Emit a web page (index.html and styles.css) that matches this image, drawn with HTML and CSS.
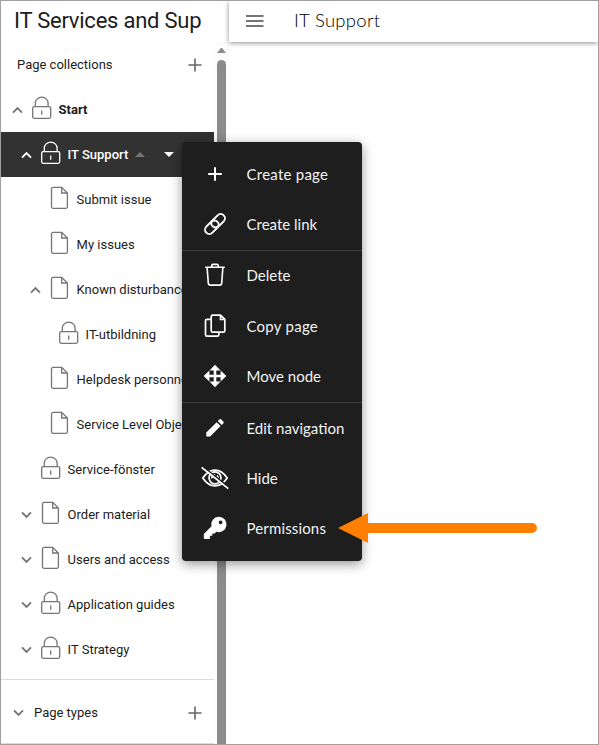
FILE: index.html
```html
<!DOCTYPE html>
<html lang="en">
<head>
<meta charset="utf-8">
<title>IT Support</title>
<link rel="stylesheet" href="styles.css">
</head>
<body>
<svg class="sprite" aria-hidden="true">
  <symbol id="up" viewBox="0 0 11 8"><path d="M1 6.6 5.5 2.1 10 6.6" fill="none" stroke="currentColor" stroke-width="1.9"/></symbol>
  <symbol id="down" viewBox="0 0 11 8"><path d="M1 1.4 5.5 5.9 10 1.4" fill="none" stroke="currentColor" stroke-width="1.9"/></symbol>
  <symbol id="lock" viewBox="0 0 20 24"><g fill="none" stroke="currentColor" stroke-width="1.3"><rect x=".7" y="10.6" width="18" height="11.7" rx="1.5"/><path d="M3.3 10.5V7.2a6.4 6.1 0 0 1 12.8 0v3.3M9.7 14.5v4.2"/></g></symbol>
  <symbol id="file" viewBox="0 0 20 24"><path d="M11.7 1.4H3a1.5 1.5 0 0 0-1.5 1.5v17.9A1.5 1.5 0 0 0 3 22.3h12.9a1.5 1.5 0 0 0 1.5-1.5V7zV7h5.7" fill="none" stroke="currentColor" stroke-width="1.3"/></symbol>
  <symbol id="plus" viewBox="0 0 14 14"><path d="M7 .5v13M.5 7h13" fill="none" stroke="currentColor" stroke-width="1.6"/></symbol>
</svg>
<div class="app">
  <aside class="sidebar">
    <div class="nav">
      <h1 class="title">IT Services and Sup</h1>
      <div class="section"><span>Page collections</span><svg class="plus"><use href="#plus"/></svg></div>
      <ul class="tree">
        <li class="row l0 root"><svg class="chev"><use href="#up"/></svg><svg class="ico"><use href="#lock"/></svg><span>Start</span></li>
        <li class="row l1 active"><svg class="chev"><use href="#up"/></svg><svg class="ico"><use href="#lock"/></svg><span>IT Support</span><i class="tri-up"></i><i class="tri-down"></i></li>
        <li class="row l2"><i class="chev"></i><svg class="ico"><use href="#file"/></svg><span>Submit issue</span></li>
        <li class="row l2"><i class="chev"></i><svg class="ico"><use href="#file"/></svg><span>My issues</span></li>
        <li class="row l2"><svg class="chev"><use href="#up"/></svg><svg class="ico"><use href="#file"/></svg><span>Known disturbances</span></li>
        <li class="row l3"><i class="chev"></i><svg class="ico"><use href="#lock"/></svg><span>IT-utbildning</span></li>
        <li class="row l2"><i class="chev"></i><svg class="ico"><use href="#file"/></svg><span>Helpdesk personnel</span></li>
        <li class="row l2"><i class="chev"></i><svg class="ico"><use href="#file"/></svg><span>Service Level Objects</span></li>
        <li class="row l1"><i class="chev"></i><svg class="ico"><use href="#lock"/></svg><span>Service-fönster</span></li>
        <li class="row l1"><svg class="chev"><use href="#down"/></svg><svg class="ico"><use href="#file"/></svg><span>Order material</span></li>
        <li class="row l1"><svg class="chev"><use href="#down"/></svg><svg class="ico"><use href="#file"/></svg><span>Users and access</span></li>
        <li class="row l1"><svg class="chev"><use href="#down"/></svg><svg class="ico"><use href="#lock"/></svg><span>Application guides</span></li>
        <li class="row l1"><svg class="chev"><use href="#down"/></svg><svg class="ico"><use href="#lock"/></svg><span>IT Strategy</span></li>
      </ul>
      <div class="section types"><svg class="chev"><use href="#down"/></svg><span>Page types</span><svg class="plus"><use href="#plus"/></svg></div>
    </div>
    <div class="scrollbar"><i class="arrow"></i><i class="thumb"></i></div>
  </aside>
  <main class="main">
    <header class="bar">
      <svg class="burger" viewBox="0 0 18 12"><path d="M0 1h17.5M0 6h17.5M0 11h17.5" stroke="currentColor" stroke-width="1.8"/></svg>
      <h2>IT Support</h2>
    </header>
  </main>
</div>
<div class="menu">
  <div class="group first">
    <div class="item"><svg viewBox="0 0 28 28"><path d="M14 7.2v13.6M7.2 14h13.6" stroke="#fff" stroke-width="2"/></svg><span class="w1">Create page</span></div>
    <div class="item"><svg viewBox="0 0 28 28"><g transform="rotate(-45 14 14)" fill="none" stroke="#fff" stroke-width="1.9"><path d="M10.7 13.2a4.3 4.3 0 0 1 4.3-3.5h7a4.3 4.3 0 0 1 0 8.6h-5.5"/><path d="M17.3 14.8a4.3 4.3 0 0 1-4.3 3.5H6a4.3 4.3 0 0 1 0-8.6h5.5"/><path d="M11.5 9.7q5.7 0 5.8 5.1M16.5 18.3q-5.7 0-5.8-5.1"/></g></svg><span>Create link</span></div>
  </div>
  <div class="group middle">
    <div class="item lift"><svg viewBox="0 0 28 28"><path d="M4.2 6.2h19.6M10.7 6V4.7q0-1.3 1.3-1.3h4q1.3 0 1.3 1.3V6M6.1 6.4l1.2 15.7q.2 2 2 2h9.4q1.8 0 2-2l1.2-15.7" fill="none" stroke="#fff" stroke-width="1.6"/></svg><span>Delete</span></div>
    <div class="item"><svg viewBox="0 0 28 28"><g fill="none" stroke="#fff" stroke-width="1.7"><path d="M19.5 3.2h-7.8q-1.5 0-1.5 1.5v14q0 1.5 1.5 1.5h10.6q1.5 0 1.5-1.5V7.3zv4.3h4.2"/><path d="M10 7.4H6q-1.5 0-1.5 1.5v13.8q0 1.5 1.5 1.5h10.3q1.5 0 1.5-1.5v-2.3"/></g></svg><span class="w1">Copy page</span></div>
    <div class="item"><svg viewBox="0 0 28 28"><path d="M14 2.7l5.5 5.7h-4.2v4.3h4.3V8.5l5.7 5.5-5.7 5.5v-4.2h-4.3v4.3h4.2L14 25.3l-5.5-5.7h4.2v-4.3H8.4v4.2L2.7 14l5.7-5.5v4.2h4.3V8.4H8.5z" fill="#fff"/></svg><span>Move node</span></div>
  </div>
  <div class="group">
    <div class="item"><svg viewBox="0 0 28 28"><path d="M5.3 18.6 15.7 8.2l3.9 3.9L9.2 22.5H5.3zM16.8 7.1l1.5-1.5q1-1 2 0l2 2q.9.9 0 1.8L20.7 11z" fill="#fff"/></svg><span>Edit navigation</span></div>
    <div class="item"><svg viewBox="0 0 28 28"><g fill="none" stroke="#fff" stroke-width="1.7"><path d="M1.8 14Q7 6.1 14 6.1T26.2 14Q21 21.9 14 21.9T1.8 14z"/><circle cx="14" cy="13.8" r="6"/><path d="M10.8 14.3a3.2 3.2 0 0 1 3.4-3.5M16 11.5q1.5 1.5.8 3.5"/></g><path d="M1.6 2.2 28.3 23.4" stroke="#1e1e1e" stroke-width="1.4"/><path d="M.6 3.4 27.3 24.6" stroke="#fff" stroke-width="1.8"/></svg><span>Hide</span></div>
    <div class="item"><svg viewBox="0 0 28 28"><path fill-rule="evenodd" d="M17.7 2.7a7.7 7.7 0 1 1-2.3 15l-1.8 1.8h-2.3v2.3H9v2.3q0 1-1 1H3.9q-1.1 0-1.1-1v-4l7.7-7.8A7.7 7.7 0 0 1 17.7 2.7zm1.9 3.8a1.9 1.9 0 1 0 .01 0z" fill="#fff"/></svg><span class="w2">Permissions</span></div>
  </div>
</div>
<svg class="pointer" viewBox="0 0 200 30"><path d="M0 15 30 0v10h164a5 5 0 0 1 0 10H30v10z" fill="#ff8000"/></svg>
</body>
</html>
```
FILE: styles.css
```css
* { box-sizing: border-box; }
body { margin: 0; background: #fff; font: 13px/20px Roboto, sans-serif; color: #1c1c1c; overflow: hidden; }
svg { display: block; flex: none; }
i { display: block; flex: none; }
.sprite { position: absolute; width: 0; height: 0; }
.app { display: flex; width: 599px; height: 745px; border: 1px solid #a0a0a0; overflow: hidden; }
.sidebar { display: flex; width: 228px; flex: none; }
.nav { width: 213px; overflow: hidden; }
.title { margin: 0; padding-left: 13px; height: 41px; font-size: 22px; line-height: 40px; font-weight: 400; letter-spacing: -.23px; white-space: nowrap; }
.section { display: flex; align-items: center; height: 45px; padding: 0 12px 0 16px; }
.plus { width: 14px; height: 14px; margin-left: auto; color: #666; }
.tree { list-style: none; margin: 0; padding: 0 0 7px; }
.row { display: flex; align-items: center; height: 45px; white-space: nowrap; color: #1c1c1c; }
.l0 { padding-left: 11px; }
.l1 { padding-left: 20px; }
.l2 { padding-left: 29px; }
.l3 { padding-left: 38px; }
.chev { width: 11px; height: 8px; margin-right: 9px; color: #757575; }
.ico { width: 20px; height: 24px; margin: 0 6.6px 3px 0; color: #757575; }
.root { font-weight: 700; }
.active { background: #323232; color: #fff; font-weight: 500; }
.active .chev, .active .ico { color: #fff; }
.tri-up { margin-left: 7px; border: 5px solid transparent; border-top: 0; border-bottom-color: #757575; }
.tri-down { margin-left: 19px; border: 5px solid transparent; border-bottom: 0; border-top-color: #fff; }
.types { height: 65px; border-top: 1px solid #dcdcdc; border-bottom: 1px solid #dcdcdc; padding: 2px 12px 0 12px; }
.types .chev { margin-right: 10px; }
.scrollbar { width: 15px; margin-top: 41px; padding: 6px 3px 0; background: #fcfcfc; }
.arrow { border: 4.5px solid transparent; border-top: 0; border-bottom: 5px solid #8b8b8b; }
.thumb { width: 9px; height: 700px; margin-top: 7px; border-radius: 4.5px; background: #8b8b8b; }
.main { flex: 1; }
.bar { display: flex; align-items: center; height: 41px; padding: 0 0 2px 17px; box-shadow: 0 1px 5px rgba(0,0,0,.45); }
.burger { width: 18px; height: 12px; color: #757575; }
.bar h2 { margin: -2px 0 0 30px; font: 300 18.5px/24px Lato, sans-serif; letter-spacing: .3px; color: #000; }
.menu { position: absolute; left: 182px; top: 142px; width: 180px; height: 419px; padding: 7px 0 8px; border-radius: 4px; background: #1e1e1e; box-shadow: 0 3px 12px rgba(0,0,0,.42); color: #f2f2f2; font: 15px/20px Lato, sans-serif; }
.group { display: flex; flex-direction: column; }
.first { padding-bottom: 1px; }
.group + .group { border-top: 1px solid #3b3b3b; }
.item { display: flex; align-items: center; height: 50px; padding: 0 0 1px 18.5px; white-space: nowrap; }
.lift { padding-bottom: 3px; }
.middle { padding-bottom: 1px; }
.item svg { width: 28px; height: 28px; margin-right: 18px; }
.w1 { letter-spacing: .25px; }
.w2 { letter-spacing: .15px; }
.pointer { position: absolute; left: 338px; top: 513px; width: 200px; height: 30px; }
```
